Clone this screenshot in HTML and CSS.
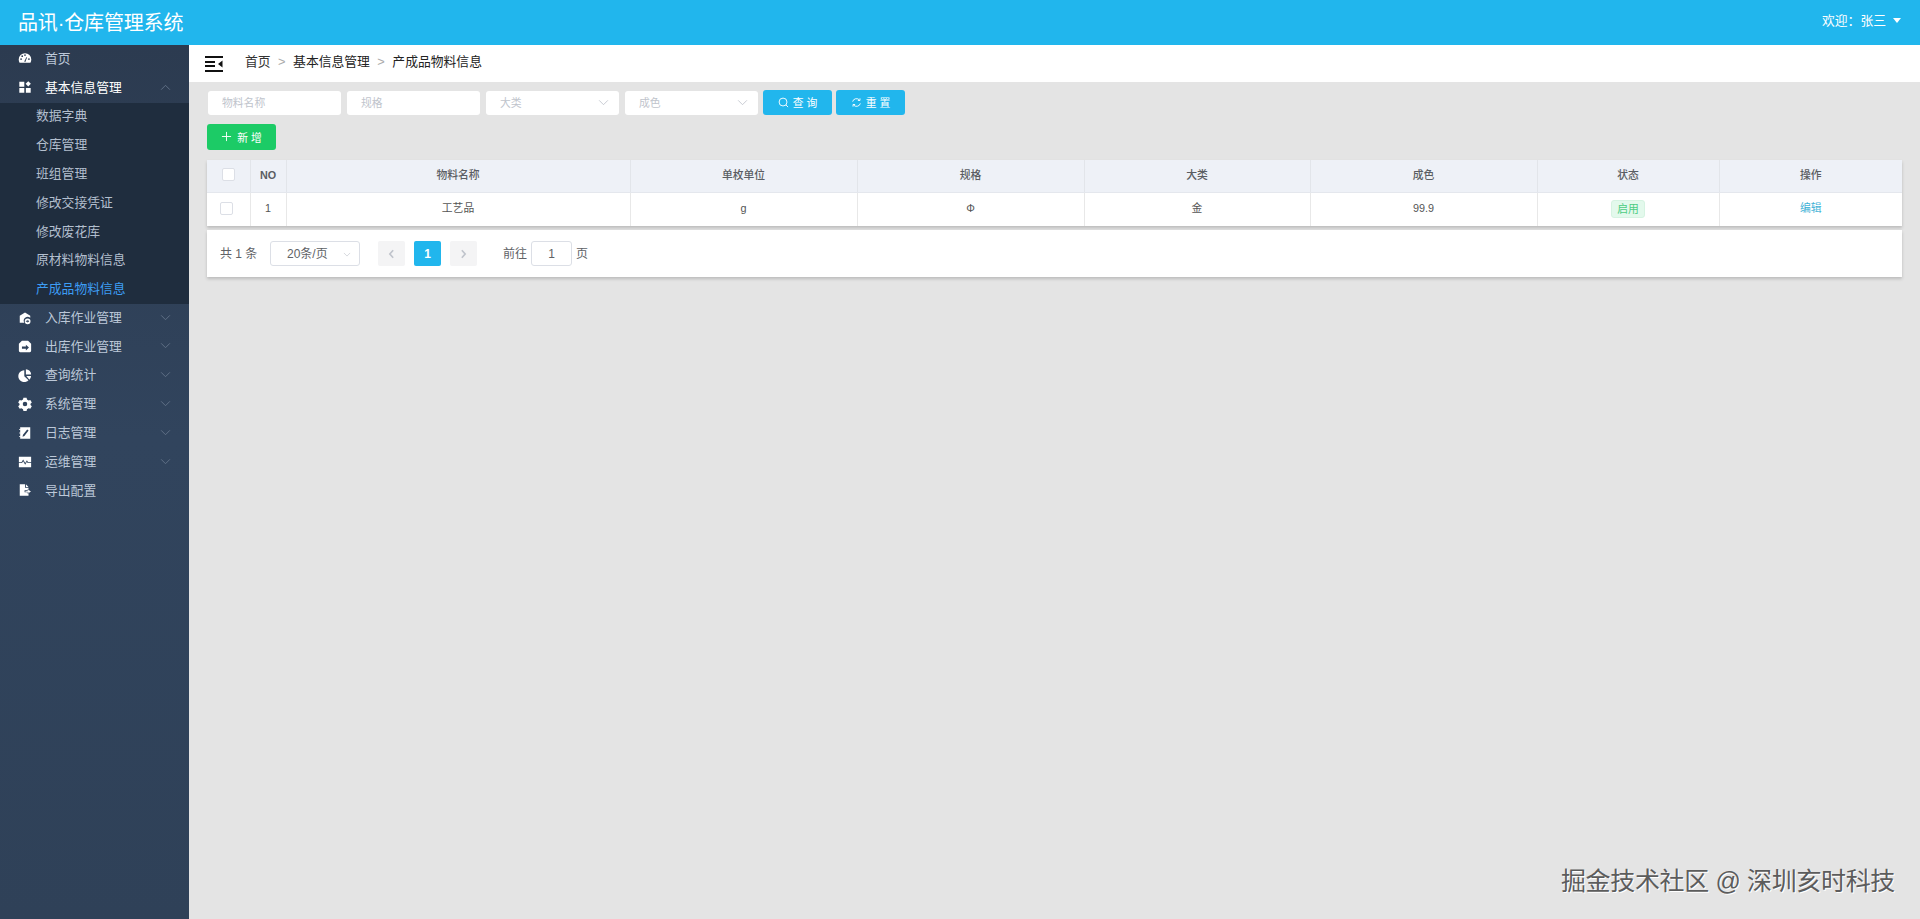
FILE: index.html
```html
<!DOCTYPE html>
<html lang="zh-CN">
<head>
<meta charset="utf-8">
<title>品讯·仓库管理系统</title>
<link rel="stylesheet" href="styles.css">
</head>
<body>
<div class="app">
  <header class="topbar">
    <div class="brand">品讯<span class="dot">·</span>仓库管理系统</div>
    <div class="user">欢迎：张三<span class="caret"></span></div>
  </header>
  <div class="main">
    <nav class="side">
      <a class="item"><svg class="ico" viewBox="0 0 16 16"><path fill="#fff" fill-rule="evenodd" d="M8 2.500a7.200 7.200 0 0 0-7.200 7.200c0 1.400.4 2.700 1 3.800h12.400c.6-1.100 1-2.400 1-3.800A7.200 7.200 0 0 0 8 2.500zM3.500 10.200a1 1 0 1 1 0-2 1 1 0 0 1 0 2zm1.300-3.300a1 1 0 1 1 0-2 1 1 0 0 1 0 2zm3.200-1.200a1 1 0 1 1 0-2 1 1 0 0 1 0 2zm1.200 6.400H6.800a1.300 1.300 0 0 1 1-1.300l1.700-3.700.9.400-1.600 3.700c.3.200.4.600.4.900zm3.300-1.900a1 1 0 1 1 0-2 1 1 0 0 1 0 2z"/></svg><span>首页</span></a>
      <a class="item item-open"><svg class="ico" viewBox="0 0 16 16"><path fill="#fff" d="M1.500 2h5.700v5.700H1.500zM1.500 9h5.700v5.500H1.500zM9 9h5.500v5.500H9zM11.700 1.300l3 3-3 3-3-3z"/></svg><span>基本信息管理</span><svg class="chev chev-up" viewBox="0 0 12 8"><path d="M1 6.500l5-5 5 5"/></svg></a>
      <div class="sub">
        <a class="sub-item">数据字典</a>
        <a class="sub-item">仓库管理</a>
        <a class="sub-item">班组管理</a>
        <a class="sub-item">修改交接凭证</a>
        <a class="sub-item">修改废花库</a>
        <a class="sub-item">原材料物料信息</a>
        <a class="sub-item sub-active">产成品物料信息</a>
      </div>
      <a class="item"><svg class="ico" viewBox="0 0 16 16"><path fill="#fff" d="M8 1.800l6 3.700v2.300a4.500 4.500 0 0 0-6.800 5.700H2V5.500z"/><path fill="#fff" d="M11 8.500a3.300 3.300 0 1 1 0 6.600 3.300 3.300 0 0 1 0-6.600zm-.2 1.500v1.200H9v1.100h1.800v1.200l2.100-1.700z"/></svg><span>入库作业管理</span><svg class="chev" viewBox="0 0 12 8"><path d="M1 1.500l5 5 5-5"/></svg></a>
      <a class="item"><svg class="ico" viewBox="0 0 16 16"><path fill="#fff" fill-rule="evenodd" d="M4.500 2h7L15 5.500v8a1.500 1.500 0 0 1-1.500 1.500h-11A1.500 1.500 0 0 1 1 13.500v-8zM9 6.500v2H4.500v2.500H9v2l3.500-3.200z"/></svg><span>出库作业管理</span><svg class="chev" viewBox="0 0 12 8"><path d="M1 1.500l5 5 5-5"/></svg></a>
      <a class="item"><svg class="ico" viewBox="0 0 16 16"><path fill="#fff" d="M7.200 2.500v6.800l4.800 4.800A6.800 6.800 0 1 1 7.200 2.500zM9 1.500a6 6 0 0 1 6 6H9zM9.500 9H15a6.800 6.800 0 0 1-2 4.300z"/></svg><span>查询统计</span><svg class="chev" viewBox="0 0 12 8"><path d="M1 1.500l5 5 5-5"/></svg></a>
      <a class="item"><svg class="ico" viewBox="0 0 16 16"><path fill="#fff" fill-rule="evenodd" d="M6.200 1.500h3.600l.5 2 1.800 1 2-.6 1.700 3-1.500 1.400v1.400l1.500 1.400-1.700 3-2-.6-1.800 1-.5 2H6.200l-.5-2-1.800-1-2 .6-1.700-3 1.500-1.400V8.300L.2 6.900l1.700-3 2 .6 1.800-1zM8 6a2.600 2.600 0 1 0 0 5.200A2.600 2.600 0 0 0 8 6z" transform="translate(0 -.6)"/></svg><span>系统管理</span><svg class="chev" viewBox="0 0 12 8"><path d="M1 1.500l5 5 5-5"/></svg></a>
      <a class="item"><svg class="ico" viewBox="0 0 16 16"><path fill="#fff" fill-rule="evenodd" d="M2.500 1.500h11.500v13H2.500zM10.500 4l-4.800 6-.5 2.200 2.100-.9 4.800-6.100z"/><path fill="#fff" d="M1.500 3.500h1.500v1H1.500zM1.500 7.500h1.500v1H1.500zM1.500 11.500h1.500v1H1.500z"/></svg><span>日志管理</span><svg class="chev" viewBox="0 0 12 8"><path d="M1 1.500l5 5 5-5"/></svg></a>
      <a class="item"><svg class="ico" viewBox="0 0 16 16"><path fill="#fff" fill-rule="evenodd" d="M1 2h14v12H1zM1 8.200v1h3.600l1.300-2.200 2.300 4 2-3.200.8 1.400H15v-1h-3.400L10.200 6 8.200 9.200 5.900 5.200 4 8.200z"/></svg><span>运维管理</span><svg class="chev" viewBox="0 0 12 8"><path d="M1 1.500l5 5 5-5"/></svg></a>
      <a class="item"><svg class="ico" viewBox="0 0 16 16"><path fill="#fff" d="M2 1.500h6v4h4v2.700H7.500v2.300H12v4H2zM9 1.500l3 3H9zM11 7v2.200H8.500v.800H11v2.200l3.800-2.600z"/></svg><span>导出配置</span></a>
    </nav>
    <main class="content">
      <div class="crumbbar">
        <svg class="toggle" viewBox="0 0 18 16"><path d="M0 1h18M0 15h18M0 6h10M0 10h10" stroke="#111" stroke-width="1.800" fill="none"/><path d="M17.500 4.500v7L13 8z" fill="#111"/></svg>
        <span class="crumb crumb-home">首页</span><span class="sep">&gt;</span><span class="crumb">基本信息管理</span><span class="sep">&gt;</span><span class="crumb">产成品物料信息</span>
      </div>
      <div class="page">
        <div class="filters">
          <div class="field">物料名称</div>
          <div class="field">规格</div>
          <div class="field">大类<svg class="dd" viewBox="0 0 12 8"><path d="M1 1.500l5 5 5-5"/></svg></div>
          <div class="field">成色<svg class="dd" viewBox="0 0 12 8"><path d="M1 1.500l5 5 5-5"/></svg></div>
          <button class="btn btn-blue"><svg class="bi" viewBox="0 0 12 12"><circle cx="5.500" cy="5.500" r="4.300"/><path d="M8.700 8.700l2.300 2.300"/></svg>查 询</button>
          <button class="btn btn-blue"><svg class="bi" viewBox="0 0 12 12"><path d="M1.800 5a4.300 4.300 0 0 1 7.600-1.500M10.200 7a4.300 4.300 0 0 1-7.600 1.500"/><path d="M9.800 1.500v2.300H7.500M2.200 10.500V8.200h2.300"/></svg>重 置</button>
        </div>
        <div class="actions">
          <button class="btn btn-green"><svg class="bi bi-plus" viewBox="0 0 12 12"><path d="M6 1v10M1 6h10"/></svg>新 增</button>
        </div>
        <div class="card">
          <table class="grid">
            <colgroup><col class="c-check"><col class="c-no"><col class="c-name"><col class="c-a"><col class="c-a"><col class="c-b"><col class="c-a"><col class="c-c"><col class="c-d"></colgroup>
            <thead>
              <tr><th><span class="box box-head"></span></th><th class="th-no">NO</th><th>物料名称</th><th>单枚单位</th><th>规格</th><th>大类</th><th>成色</th><th>状态</th><th>操作</th></tr>
            </thead>
            <tbody>
              <tr><td><span class="box"></span></td><td>1</td><td>工艺品</td><td>g</td><td>Φ</td><td>金</td><td>99.9</td><td><span class="tag">启用</span></td><td><a class="link">编辑</a></td></tr>
            </tbody>
          </table>
        </div>
        <div class="pager">
          <span class="total">共 1 条</span>
          <div class="size">20条/页<svg class="dd dd-small" viewBox="0 0 12 8"><path d="M1 1.500l5 5 5-5"/></svg></div>
          <button class="pbtn"><svg class="pa" viewBox="0 0 8 12"><path d="M6 1.500L2 6l4 4.500"/></svg></button>
          <button class="pbtn pbtn-on">1</button>
          <button class="pbtn"><svg class="pa" viewBox="0 0 8 12"><path d="M2 1.500L6 6l-4 4.500"/></svg></button>
          <span class="goto">前往</span>
          <div class="jump">1</div>
          <span class="unit">页</span>
        </div>
      </div>
      <div class="watermark">掘金技术社区 @ 深圳亥时科技</div>
    </main>
  </div>
</div>
</body>
</html>
```

FILE: styles.css
```css
* { box-sizing: border-box; }
html, body { margin: 0; height: 100%; overflow: hidden; }
body { font-family: "Liberation Sans", "Noto Sans CJK SC", sans-serif; line-height: 1.2; color: #606266; }
.app { height: 919px; display: flex; flex-direction: column; }

.topbar { height: 45px; flex: none; background: #21b6ed; color: #fff; display: flex; align-items: center; justify-content: space-between; padding: 0 19px 0 18px; }
.brand { font-size: 20px; letter-spacing: -.15px; }
.user { font-size: 12.8px; display: flex; align-items: center; margin-top: -4px; }
.caret { width: 0; height: 0; margin-left: 7px; border: 4px solid transparent; border-top: 5px solid #fff; border-bottom: 0; }

.main { flex: 1; display: flex; min-height: 0; }
.side { width: 189px; flex: none; background: linear-gradient(#2c3b50, #31445d 45%, #2f4158); }
.item { height: 28.8px; display: flex; align-items: center; padding: 0 0 2px 18px; font-size: 12.8px; color: #bcc8d8; position: relative; }
.item-open { color: #fff; }
.ico { width: 14px; height: 14px; margin-right: 13px; flex: none; }
.chev { position: absolute; right: 18px; top: 9.500px; width: 11px; height: 7px; fill: none; stroke: #65758a; stroke-width: 1; }
.chev-up { top: 10.500px; }
.sub { background: #1f2d3e; }
.sub-item { height: 28.8px; display: flex; align-items: center; padding: 0 0 2px 36px; font-size: 12.8px; color: #b3bfce; }
.sub-active { color: #3d9df5; }

.content { flex: 1; background: #e4e4e4; position: relative; min-width: 0; }
.crumbbar { height: 37px; background: #fff; display: flex; align-items: center; padding-left: 16px; font-size: 12.8px; color: #222; }
.toggle { width: 18px; height: 16px; margin-right: 22px; }
.crumb { margin-top: -3px; }
.crumb-home { color: #333; }
.sep { color: #aaa; margin: -3px 7.500px 0; }

.page { padding: 8px 18px 0; }
.filters { display: flex; height: 26px; align-items: flex-start; padding-left: 1px; }
.field { width: 133px; height: 24px; margin: 1px 6px 0 0; background: #fff; border-radius: 3px; font-size: 10.800px; color: #c0c4cc; display: flex; align-items: center; padding: 1px 0 0 14px; position: relative; }
.dd { position: absolute; right: 10px; top: 8px; width: 11px; height: 7px; fill: none; stroke: #c0c4cc; stroke-width: 1; }
.btn { border: 0; border-radius: 3px; color: #fff; font-family: inherit; font-size: 10.800px; height: 25px; width: 69px; padding: 0 0 1px; display: flex; align-items: center; justify-content: center; }
.btn-blue { background: #21b6ed; margin-right: 4px; }
.filters .btn-blue:first-of-type { margin-left: -1px; }
.btn-green { background: #1ccb66; height: 26px; }
.bi { width: 11px; height: 11px; margin-right: 4px; fill: none; stroke: #fff; stroke-width: 1; }
.bi-plus { margin-right: 5px; }
.actions { margin-top: 8px; }

.card { margin-top: 10px; background: #fff; box-shadow: 0 2px 3px rgba(0,0,0,.18); }
.grid { width: 100%; border-collapse: collapse; table-layout: fixed; font-size: 10.800px; text-align: center; }
.c-check { width: 43px; } .c-no { width: 36px; } .c-name { width: 344px; } .c-a { width: 227px; } .c-b { width: 226px; } .c-c { width: 182px; } .c-d { width: 183px; }
.grid th { height: 32px; background: #eef1f7; font-weight: 500; color: #5a5d62; padding: 0 0 1px; border-right: 1px solid #e2e5ea; border-bottom: 1px solid #e4e7ed; }
.grid th.th-no { font-weight: 700; }
.grid td { height: 34px; padding: 0 0 1px; color: #555; border-right: 1px solid #e8e8e8; }
.grid th:last-child, .grid td:last-child { border-right: 0; }
.box { display: inline-block; width: 13px; height: 13px; border: 1px solid #dcdfe6; background: #fff; border-radius: 2px; vertical-align: middle; position: relative; left: -2px; top: -1px; }
.box-head { left: 0; }
.tag { display: inline-block; height: 18px; line-height: 16px; padding: 0 5px; background: #e3f9ec; border: 1px solid #d6f3e2; border-radius: 3px; color: #4ccc82; }
.link { color: #3fb2d6; }

.pager { margin-top: 4px; height: 47px; background: #fff; box-shadow: 0 2px 3px rgba(0,0,0,.18); display: flex; align-items: center; padding-left: 13px; font-size: 12px; color: #606266; }
.total { width: 50px; margin-top: 2px; }
.size { width: 90px; height: 25px; border: 1px solid #dcdfe6; border-radius: 3px; padding: 1px 0 0 16px; display: flex; align-items: center; position: relative; margin-right: 18px; }
.dd-small { right: 8px; top: 10px; width: 8px; height: 5px; }
.pbtn { width: 27px; height: 25px; border: 0; padding: 0; background: #f4f4f5; border-radius: 2px; margin-right: 9px; display: flex; align-items: center; justify-content: center; font-family: inherit; font-weight: 700; font-size: 12px; color: #fff; }
.pbtn-on { background: #21b6ed; }
.pa { width: 7px; height: 10px; fill: none; stroke: #c0c4cc; stroke-width: 2; }
.goto { margin: 2px 4px 0 17px; }
.jump { width: 41px; height: 25px; border: 1px solid #dcdfe6; border-radius: 3px; padding-top: 1px; display: flex; align-items: center; justify-content: center; margin-right: 4px; }
.unit { margin-top: 2px; }

.watermark { position: absolute; right: 25px; bottom: 21px; font-size: 25px; letter-spacing: -.35px; line-height: 34px; color: #5c5c5c; text-shadow: 1px 1px 0 #fff; white-space: nowrap; }
```
